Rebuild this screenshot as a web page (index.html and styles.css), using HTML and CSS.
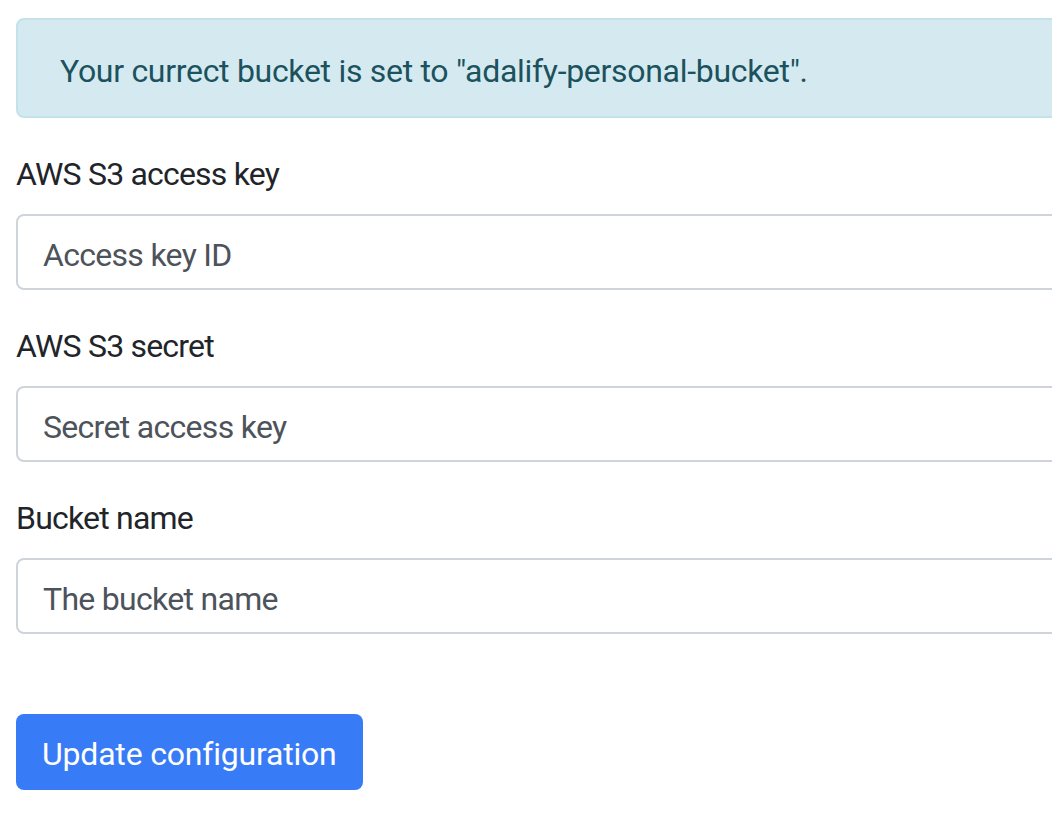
FILE: index.html
```html
<!DOCTYPE html>
<html lang="en">
<head>
<meta charset="utf-8">
<title>Bucket configuration</title>
<link rel="stylesheet" href="styles.css">
</head>
<body>
<main class="page">
  <div class="alert">Your currect bucket is set to "adalify-personal-bucket".</div>
  <form class="form">
    <div class="group">
      <label class="label" for="key">AWS S3 access key</label>
      <input class="input" id="key" type="text" placeholder="Access key ID">
    </div>
    <div class="group">
      <label class="label" for="secret">AWS S3 secret</label>
      <input class="input" id="secret" type="text" placeholder="Secret access key">
    </div>
    <div class="group">
      <label class="label" for="bucket">Bucket name</label>
      <input class="input" id="bucket" type="text" placeholder="The bucket name">
    </div>
    <div class="actions">
      <button class="btn" type="button">Update configuration</button>
    </div>
  </form>
</main>
</body>
</html>
```

FILE: styles.css
```css
html, body {
  margin: 0;
  padding: 0;
  overflow: hidden;
  background: #ffffff;
}
body {
  font-family: Roboto, Inter, "Noto Sans", sans-serif;
  font-size: 32px;
  line-height: 1.5;
  letter-spacing: -0.3px;
  color: #212529;
}
.page {
  width: 1200px;
  padding: 18px 0 0 16px;
}
.alert {
  padding: 27px 40px 21px 42px;
  background: #d5eaf0;
  border: 2px solid #c3e2ea;
  border-radius: 8px;
  color: #1c525d;
  margin-bottom: 32px;
}
.form {
  display: flex;
  flex-direction: column;
}
.group {
  display: flex;
  flex-direction: column;
  margin-bottom: 32px;
}
.label {
  display: block;
  margin-bottom: 16px;
  color: #212529;
  letter-spacing: -0.8px;
}
.input {
  font: inherit;
  letter-spacing: -0.7px;
  height: 76px;
  box-sizing: border-box;
  padding: 15px 25px 9px;
  border: 2px solid #ced4da;
  border-radius: 8px;
  background: #fff;
  color: #495057;
  outline: none;
}
.input::placeholder {
  color: #4d535a;
  opacity: 1;
}
.actions {
  padding-top: 48px;
}
.btn {
  font: inherit;
  letter-spacing: -0.2px;
  height: 76px;
  padding: 14px 26px 10px;
  border: 0;
  border-radius: 8px;
  background: #377bf6;
  color: #fff;
  cursor: pointer;
}
```
